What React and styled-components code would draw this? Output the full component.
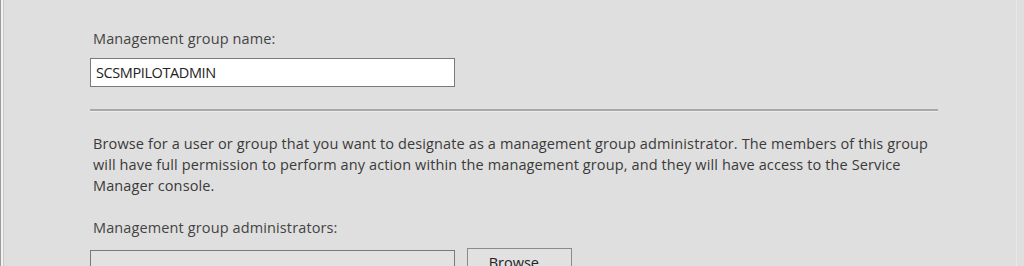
import React from "react";
import styled, { createGlobalStyle } from "styled-components";

const GlobalStyle = createGlobalStyle`
  html, body {
    margin: 0;
    padding: 0;
    background: #dfdfdf;
  }
  body {
    font-family: "Open Sans", "Noto Sans", sans-serif;
  }
`;

const Frame = styled.div`
  width: 1024px;
  height: 266px;
  box-sizing: border-box;
  background: #dfdfdf;
  border-left: 1px solid #9a9a9a;
  box-shadow: inset 2px 0 0 #f2f2f2, inset 3px 0 0 #c8c8c8, inset -7px 0 0 #dfdfdf,
    inset -8px 0 0 #e9e9e9;
  overflow: hidden;
`;

const Content = styled.div`
  width: 848px;
  padding: 29px 0 0 89px;
  display: flex;
  flex-direction: column;
  color: #3a3a3a;
  font-size: 14.5px;
  letter-spacing: 0.12px;
`;

const Label = styled.div`
  padding-left: 3px;
  line-height: 20px;
  margin-top: ${(p) => p.$top || 0}px;
  margin-bottom: ${(p) => p.$gap}px;
  color: #444;
`;

const Row = styled.div`
  display: flex;
  align-items: flex-start;
  gap: 12px;
`;

const TextBox = styled.div`
  width: 365px;
  height: 29px;
  box-sizing: border-box;
  border: 1px solid #7a7a7a;
  background: ${(p) => (p.$empty ? "#e2e2e2" : "#fff")};
  padding: 0 5px;
  display: flex;
  align-items: center;
  color: #222;
  font-size: 14.5px;
  letter-spacing: -0.4px;
`;

const Separator = styled.hr`
  margin: 22px 0 0;
  border: 0;
  height: 3px;
  background: linear-gradient(#a8a8a8 0 2px, #ececec 2px 3px);
`;

const Paragraph = styled.p`
  margin: 21px 0 0;
  padding-left: 3px;
  line-height: 21px;
`;

const Button = styled.button`
  margin-top: -2px;
  width: 105px;
  height: 30px;
  box-sizing: border-box;
  border: 1px solid #8a8a8a;
  background: #e1e1e1;
  font-family: inherit;
  font-size: 14.5px;
  color: #222;
  padding: 4px 0 0;
  display: flex;
  justify-content: center;
`;

export default function App() {
  return (
    <>
      <GlobalStyle />
      <Frame>
        <Content>
          <Label $gap={9}>Management group name:</Label>
          <TextBox>SCSMPILOTADMIN</TextBox>
          <Separator />
          <Paragraph>
            Browse for a user or group that you want to designate as a management group
            administrator. The members of this group will have full permission to perform any
            action within the management group, and they will have access to the Service Manager
            console.
          </Paragraph>
          <Label $top={22} $gap={12}>
            Management group administrators:
          </Label>
          <Row>
            <TextBox $empty />
            <Button>Browse...</Button>
          </Row>
        </Content>
      </Frame>
    </>
  );
}
